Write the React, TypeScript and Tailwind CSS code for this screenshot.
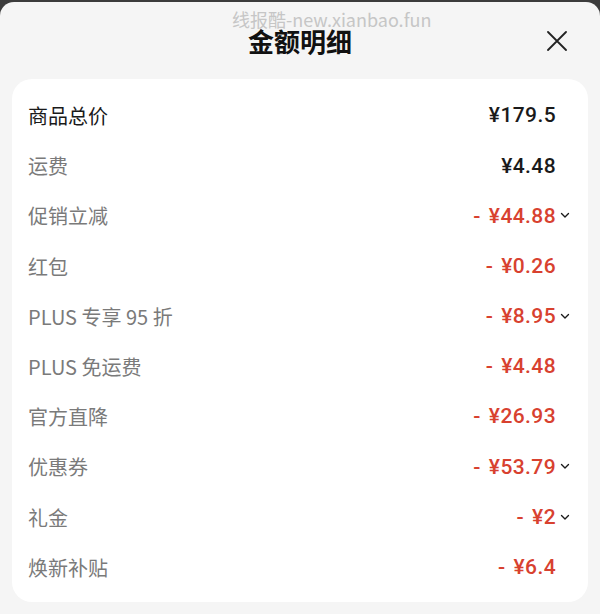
import { ChevronDown } from "lucide-react";

const rows = [
  { label: "商品总价", value: "¥179.5", dark: true },
  { label: "运费", value: "¥4.48", black: true },
  { label: "促销立减", value: "¥44.88", minus: true, more: true },
  { label: "红包", value: "¥0.26", minus: true },
  { label: "PLUS 专享 95 折", value: "¥8.95", minus: true, more: true },
  { label: "PLUS 免运费", value: "¥4.48", minus: true },
  { label: "官方直降", value: "¥26.93", minus: true },
  { label: "优惠券", value: "¥53.79", minus: true, more: true },
  { label: "礼金", value: "¥2", minus: true, more: true },
  { label: "焕新补贴", value: "¥6.4", minus: true },
];

const cjk = { fontFamily: '"Noto Sans CJK SC", "Noto Sans", sans-serif' };
const num = { fontFamily: 'Roboto, "Noto Sans CJK SC", sans-serif' };

export default function App() {
  return (
    <div className="w-[600px] h-[614px] bg-[#3c3c3c] pt-[2px] overflow-hidden">
      <div className="relative h-full bg-[#f5f5f5] rounded-t-[14px] px-3" style={cjk}>
        <div className="absolute left-[232px] top-[8px] text-[18px] leading-[19px] text-[#c6c6c6]">
          线报酷-new.xianbao.fun
        </div>
        <div className="relative flex h-[77px] items-center justify-center pb-[3px]">
          <h1 className="text-[26px] leading-[28px] font-bold text-[#111] mt-[4px]">金额明细</h1>
          <svg className="absolute right-[21px] top-[29px]" width="20" height="20" viewBox="0 0 20 20">
            <path d="M1 1 L19 19 M19 1 L1 19" stroke="#222" strokeWidth="1.8" strokeLinecap="round" />
          </svg>
        </div>
        <div className="bg-white rounded-[20px] pt-[12px] pb-[9px] pl-4 pr-[32px]">
          {rows.map((r) => (
            <div key={r.label} className="flex h-[50.2px] items-center justify-between">
              <span className={`text-[20px] ${r.dark ? "text-[#1a1a1a]" : "text-[#7a7a7a]"}`}>
                {r.label}
              </span>
              <span
                className={`relative text-[21px] font-medium tracking-[0.4px] ${
                  r.dark || r.black ? "text-[#1a1a1a]" : "text-[#d8412f]"
                }`}
                style={num}
              >
                {r.minus && <span className="mr-[8px]">-</span>}
                {r.value}
                {r.more && (
                  <ChevronDown
                    className="absolute left-full top-1/2 -translate-y-[55%] ml-[2px] text-[#1a1a1a]"
                    size={14}
                    strokeWidth={2.3}
                  />
                )}
              </span>
            </div>
          ))}
        </div>
      </div>
    </div>
  );
}
